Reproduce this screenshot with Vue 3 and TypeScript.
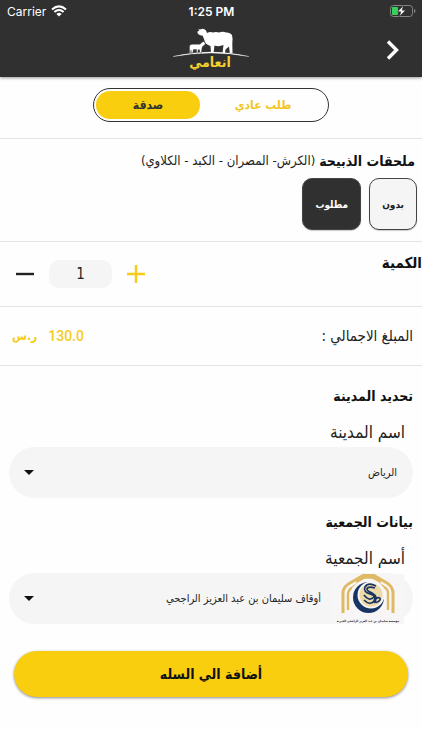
<script setup lang="ts">
import { ref, computed } from 'vue'

type OrderKind = 'charity' | 'regular'

const kind = ref<OrderKind>('charity')
const extras = ref<boolean>(true)
const quantity = ref<number>(1)
const city = ref<string>('الرياض')
const charity = ref<string>('أوقاف سليمان بن عبد العزيز الراجحي')
const unitPrice = 130

const total = computed<string>(() => (quantity.value * unitPrice).toFixed(1))

function decrease(): void {
  if (quantity.value > 1) quantity.value--
}
function increase(): void {
  quantity.value++
}
</script>

<template>
  <div class="screen" dir="rtl">
    <header class="header">
      <div class="status" dir="ltr">
        <span class="carrier">
          Carrier
          <svg class="wifi" viewBox="0 0 16 12" aria-hidden="true">
            <path d="M1 4.4Q8-1.7 15 4.4M3.4 7Q8 3 12.6 7" fill="none" stroke="#fff" stroke-width="2" />
            <path d="M5.4 8.9Q8 6.8 10.6 8.9L8 11.6Z" fill="#fff" />
          </svg>
        </span>
        <span class="clock">1:25 PM</span>
        <span class="power">
          <svg class="battery" viewBox="0 0 26 12" aria-hidden="true">
            <rect x="0.5" y="0.5" width="22" height="11" rx="3" fill="none" stroke="#858585" />
            <path d="M24 4v4q1.5-.6 1.500-2t-1.500-2" fill="#858585" />
            <rect x="2" y="2" width="6" height="8" rx="1" fill="#35d15b" />
            <path d="M13.500 0.500 7.500 6.800h3.300L9.500 11.500l6-6.300h-3.400z" fill="#fff" stroke="#303030" stroke-width="0.600" />
          </svg>
        </span>
      </div>
      <div class="bar">
        <svg class="logo" viewBox="0 0 76 46" role="img" aria-label="انعامي">
          <path d="M0 30.500Q38 21.500 76 30.500Q38 23.500 0 30.500Z" fill="#fff" stroke="#fff" stroke-width="0.300" />
          <path
            d="M24.500 5.500 26.500 4.500 25 3.500 28 3.200Q31 2 33 4.500L34 7Q37 5.500 40 6.500Q43 5.500 46 6.500Q50 5.200 53 6.500Q57 6 59 9Q60 13 59.300 17L59.500 27H56.800L56 20.500 52.500 23.500 52 27H49.500L50.500 19Q46 21 41.500 19.500L40.500 27H38L37.500 20Q32 18.500 31 13L29.500 9.500Q27.500 10 25.500 8.200L24.500 7Z"
            fill="#fff" />
          <path
            d="M16.500 27V20Q17 18 20 18.300L27 18.200 28.800 16.500 30.500 15.500 32.500 17.500 31 19.500 29.500 20.500 28.800 23 28.500 27H27L26.500 23.800H25L24.800 27H23.500V23.500H20.500L19.700 27H18.200L18 24 17.800 27Z"
            fill="#fff" stroke="#303030" stroke-width="0.400" />
          <text x="37" y="41" text-anchor="middle" class="logo-text">انعامي</text>
        </svg>
        <button class="next" type="button" aria-label="رجوع">
          <svg viewBox="0 0 14 22" aria-hidden="true">
            <path d="M2 2.500 10.500 11 2 19.500" fill="none" stroke="#fff" stroke-width="3.400" />
          </svg>
        </button>
      </div>
    </header>

    <main>
      <section class="kinds">
        <div class="toggle">
          <button type="button" :class="{ active: kind === 'regular' }" :aria-pressed="kind === 'regular'" @click="kind = 'regular'">طلب عادي</button>
          <button type="button" :class="{ active: kind === 'charity' }" :aria-pressed="kind === 'charity'" @click="kind = 'charity'">صدقة</button>
        </div>
      </section>

      <section class="extras">
        <div class="extras-head">
          <h2>ملحقات الذبيحة</h2>
          <span>(الكرش- المصران - الكبد - الكلاوي)</span>
        </div>
        <div class="choices">
          <button type="button" class="choice" :class="{ chosen: !extras }" :aria-pressed="!extras" @click="extras = false">بدون</button>
          <button type="button" class="choice" :class="{ chosen: extras }" :aria-pressed="extras" @click="extras = true">مطلوب</button>
        </div>
      </section>

      <section class="quantity">
        <label for="quantity">الكمية</label>
        <div class="stepper">
          <button type="button" aria-label="زيادة" @click="increase">
            <svg viewBox="0 0 18 18" aria-hidden="true"><path d="M9 0v18M0 9h18" stroke="#f6cc1c" stroke-width="2.400" /></svg>
          </button>
          <input id="quantity" v-model.number="quantity" type="text" inputmode="numeric" />
          <button type="button" aria-label="إنقاص" @click="decrease">
            <svg viewBox="0 0 18 18" aria-hidden="true"><path d="M0 9h18" stroke="#222" stroke-width="2.400" /></svg>
          </button>
        </div>
      </section>

      <section class="total">
        <span>المبلغ الاجمالي :</span>
        <span class="price"><b class="amount">{{ total }}</b><b>ر.س</b></span>
      </section>

      <section class="place">
        <h2>تحديد المدينة</h2>
        <label for="city">اسم المدينة</label>
        <div class="field">
          <select id="city" v-model="city">
            <option>الرياض</option>
          </select>
          <svg class="caret" viewBox="0 0 10 5" aria-hidden="true"><path d="M0 0h10L5 5z" fill="#111" /></svg>
        </div>
      </section>

      <section class="place">
        <h2>بيانات الجمعية</h2>
        <label for="charity">أسم الجمعية</label>
        <div class="field with-emblem">
          <select id="charity" v-model="charity">
            <option>أوقاف سليمان بن عبد العزيز الراجحي</option>
          </select>
          <svg class="caret" viewBox="0 0 10 5" aria-hidden="true"><path d="M0 0h10L5 5z" fill="#111" /></svg>
          <svg class="emblem" viewBox="0 0 72 50" aria-hidden="true">
            <rect width="72" height="50" fill="#f8f5f7" />
            <g fill="none" stroke="#dfba65">
              <path d="M11 39V18Q12 12 18 9L31 1.500H42L55 9Q60 12 61 18V39" stroke-width="3" />
              <path d="M16 36V19Q17 15 21 13L33 5H40L52 13Q56 15 56 19V36" stroke-width="2.400" />
            </g>
            <path d="M27 7 36 3 46 7 52 14V32H20V14Z" fill="#f8f5f7" />
            <path d="M24 7.500 32 3H41L49 7.500" fill="none" stroke="#dfba65" stroke-width="3.500" />
            <circle cx="36.500" cy="23.500" r="15.500" fill="#183463" />
            <circle cx="39" cy="21" r="13.500" fill="#f8f5f7" />
            <circle cx="39" cy="21" r="11.500" fill="#edd8a7" />
            <path d="M44 12Q36 8 33 13Q31 18 38 20Q45 22 42 27Q38 32 32 26M43 14Q36 12 35 15Q35 17 40 19Q47 23 42 29M32 21Q37 28 42 23M43 25Q49 22 48 26Q45 30 41 27" fill="none" stroke="#183463" stroke-width="1.700" />
            <text x="36" y="48" text-anchor="middle" class="emblem-text">مؤسسة سليمان بن عبد العزيز الراجحي الخيرية</text>
          </svg>
        </div>
      </section>

      <button class="submit" type="button">أضافة الي السله</button>
    </main>
  </div>
</template>

<style>
body {
  margin: 0;
  background: #fff;
}
</style>

<style scoped>
* {
  box-sizing: border-box;
}

.screen {
  background: #fefefe;
  color: #222;
  font-family: "DejaVu Sans Condensed", "DejaVu Sans", sans-serif;
  overflow-x: hidden;
}

button,
select,
input {
  font-family: inherit;
  margin: 0;
  padding: 0;
  border: 0;
  background: none;
  color: inherit;
  cursor: pointer;
}

h2 {
  margin: 0;
  font-size: 14px;
  line-height: 20px;
  color: #111;
}

svg {
  display: block;
}

.header {
  background: #303030;
  color: #fff;
  box-shadow: 0 1px 3px rgba(0, 0, 0, 0.4);
}

.status {
  display: grid;
  grid-template-columns: 1fr auto 1fr;
  align-items: center;
  height: 22px;
  padding: 0 6px 0 7px;
  font-family: Inter, sans-serif;
  font-size: 12px;
}

.carrier {
  display: flex;
  align-items: center;
  gap: 5px;
}

.wifi {
  width: 16px;
  height: 12px;
}

.clock {
  font-weight: 600;
}

.power {
  justify-self: end;
}

.battery {
  width: 26px;
  height: 12px;
}

.bar {
  display: grid;
  grid-template-columns: 1fr auto 1fr;
  height: 55px;
  padding: 4px 22px;
}

.logo {
  grid-column: 2;
  width: 76px;
  height: 46px;
}

.logo-text {
  font-size: 14px;
  font-weight: 700;
  fill: #f3d12e;
}

.next {
  grid-column: 1;
  grid-row: 1;
  justify-self: start;
  align-self: center;
}

.next svg {
  width: 14px;
  height: 22px;
}

.kinds {
  display: flex;
  justify-content: center;
  padding: 11px 16px 16px;
  border-bottom: 1px solid #e3e3e3;
}

.toggle {
  display: grid;
  grid-template-columns: 1fr 104px;
  width: 236px;
  height: 34px;
  padding: 2px;
  border: 1px solid #333;
  border-radius: 17px;
}

.toggle button {
  border-radius: 14px;
  color: #f3c71d;
  font-size: 12px;
  font-weight: 700;
}

.toggle .active {
  background: #f9ce0e;
  color: #303030;
}

.extras {
  padding: 12px 5px 11px;
  border-bottom: 1px solid #e3e3e3;
}

.extras-head {
  display: flex;
  align-items: center;
  gap: 4px;
  padding-right: 2px;
  white-space: nowrap;
}

.extras-head span {
  font-size: 13px;
  line-height: 20px;
}

.choices {
  display: flex;
  gap: 8px;
  margin-top: 7px;
}

.choice {
  height: 52px;
  padding: 0 12px;
  border: 1px solid #444;
  border-radius: 10px;
  background: #f5f5f5;
  font-size: 10px;
  font-weight: 700;
  box-shadow: 0 1px 1px rgba(0, 0, 0, 0.2);
}

.chosen {
  background: #303030;
  color: #fff;
}

.quantity {
  display: flex;
  justify-content: space-between;
  height: 65px;
  border-bottom: 1px solid #e3e3e3;
}

.quantity label {
  padding-top: 11px;
  font-size: 15px;
  line-height: 20px;
  font-weight: 700;
  color: #111;
}

.stepper {
  display: flex;
  align-items: center;
  gap: 15px;
  padding-left: 16px;
}

.stepper svg {
  width: 18px;
  height: 18px;
}

.stepper input {
  width: 63px;
  height: 28px;
  border-radius: 10px;
  background: #f5f5f5;
  text-align: center;
  font-size: 15px;
}

.total {
  display: flex;
  justify-content: space-between;
  align-items: center;
  height: 59px;
  padding: 0 9px 0 12px;
  border-bottom: 1px solid #e3e3e3;
  font-size: 15px;
}

.price {
  display: flex;
  align-items: center;
  gap: 11px;
  color: #f6cc1c;
  font-size: 12px;
}

.amount {
  font-family: Roboto, sans-serif;
  font-size: 14px;
  font-weight: 500;
}

.place {
  padding: 0 9px;
  margin-top: 20px;
}

.place + .place {
  margin-top: 14px;
}

.place label {
  display: block;
  margin-top: 14px;
  padding-right: 8px;
  font-size: 17px;
  line-height: 24px;
}

.field {
  position: relative;
  margin-top: 3px;
}

.field select {
  display: block;
  width: 100%;
  height: 51px;
  padding: 0 16px 0 32px;
  border-radius: 26px;
  background: #f5f5f5;
  appearance: none;
  font-size: 11px;
}

.field.with-emblem select {
  padding-right: 92px;
}

.caret {
  position: absolute;
  left: 15px;
  top: 23px;
  width: 10px;
  height: 5px;
  pointer-events: none;
}

.emblem {
  position: absolute;
  right: 9px;
  top: 1px;
  width: 72px;
  height: 50px;
  pointer-events: none;
}

.emblem-text {
  font-size: 3px;
  font-weight: 700;
  fill: #111;
}

.submit {
  display: block;
  width: calc(100% - 28px);
  height: 46px;
  margin: 27px 14px 32px;
  border-radius: 23px;
  background: #f9ce0e;
  color: #111;
  font-size: 14px;
  font-weight: 700;
  box-shadow: 0 1px 3px rgba(0, 0, 0, 0.45);
}
</style>
